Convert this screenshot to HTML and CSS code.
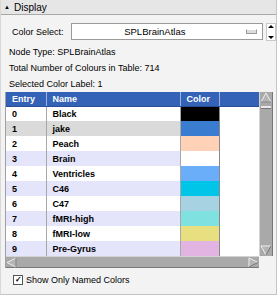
FILE: index.html
```html
<!DOCTYPE html>
<html lang="en">
<head>
    <meta charset="UTF-8">
    <title>Display</title>
    <link rel="stylesheet" href="styles.css">
</head>
<body>
    <div class="panel">
        <div class="title-bar"><span class="collapse">&#9650;</span>Display</div>
        <div class="panel-body">
            <div class="select-row">
                <span class="select-label">Color Select:</span>
                <div class="combo">
                    <span class="combo-text">SPLBrainAtlas</span>
                    <span class="combo-btn"></span>
                </div>
                <div class="spin">
                    <span class="spin-up"></span>
                    <span class="spin-down"></span>
                </div>
            </div>
            <div class="info-block">
                <div class="info">Node Type: SPLBrainAtlas</div>
                <div class="info">Total Number of Colours in Table: 714</div>
                <div class="info">Selected Color Label: 1</div>
            </div>

            <div class="table-frame">
                <div class="table-wrap">
                    <table class="colors">
                        <thead>
                            <tr><th class="c-entry">Entry</th><th class="c-name">Name</th><th class="c-color">Color</th><th class="c-fill"></th></tr>
                        </thead>
                        <tbody>
                            <tr><td>0</td><td>Black</td><td class="swatch" style="background:#000000"></td><td class="fill"></td></tr>
                            <tr class="sel"><td>1</td><td>jake</td><td class="swatch" style="background:#3a7cd0"></td><td class="fill"></td></tr>
                            <tr><td>2</td><td>Peach</td><td class="swatch" style="background:#ffd2b8"></td><td class="fill"></td></tr>
                            <tr class="alt"><td>3</td><td>Brain</td><td class="swatch" style="background:#ffffff"></td><td class="fill"></td></tr>
                            <tr><td>4</td><td>Ventricles</td><td class="swatch" style="background:#6aaefa"></td><td class="fill"></td></tr>
                            <tr class="alt"><td>5</td><td>C46</td><td class="swatch" style="background:#00c4e8"></td><td class="fill"></td></tr>
                            <tr><td>6</td><td>C47</td><td class="swatch" style="background:#a6d2e2"></td><td class="fill"></td></tr>
                            <tr class="alt"><td>7</td><td>fMRI-high</td><td class="swatch" style="background:#80e2e0"></td><td class="fill"></td></tr>
                            <tr><td>8</td><td>fMRI-low</td><td class="swatch" style="background:#e8e080"></td><td class="fill"></td></tr>
                            <tr class="alt"><td>9</td><td>Pre-Gyrus</td><td class="swatch" style="background:#e2b4e2"></td><td class="fill"></td></tr>
                        </tbody>
                    </table>
                </div>
                <div class="vscroll">
                    <svg class="arrow" width="12" height="11" viewBox="0 0 12 11"><polygon points="6,1 11,10 1,10" fill="#b4b4b4" stroke="#eeeeee"/><polyline points="11,10 1,10" stroke="#666" fill="none"/></svg>
                    <span class="grip"></span>
                    <span class="vspace"></span>
                    <svg class="arrow" width="12" height="11" viewBox="0 0 12 11"><polygon points="1,1 11,1 6,10" fill="#b4b4b4" stroke="#eeeeee"/><polyline points="11,1 6,10" stroke="#666" fill="none"/></svg>
                </div>
                <div class="hscroll">
                    <svg class="arrow" width="11" height="11" viewBox="0 0 11 11"><polygon points="1,5.5 10,1 10,10" fill="#b4b4b4" stroke="#eeeeee"/><polyline points="10,1 10,10" stroke="#666" fill="none"/></svg>
                    <span class="hspace"></span>
                    <svg class="arrow" width="11" height="11" viewBox="0 0 11 11"><polygon points="1,1 10,5.5 1,10" fill="#b4b4b4" stroke="#eeeeee"/><polyline points="10,5.5 1,10" stroke="#666" fill="none"/></svg>
                </div>
                <div class="corner"></div>
            </div>

            <label class="check"><span class="box">&#10003;</span>Show Only Named Colors</label>
        </div>
    </div>
</body>
</html>
```

FILE: styles.css
```css
body {
    margin: 0;
    background: #ffffff;
    font-family: "Liberation Sans", Arial, sans-serif;
    font-size: 9px;
    color: #000;
}
.panel {
    width: 277px;
    height: 295px;
    background: #f3f3f3;
    border-right: 1px solid #c4c4c4;
    border-bottom: 1px solid #c4c4c4;
    border-left: 1px solid #d8d8d8;
    box-sizing: border-box;
}
.title-bar {
    height: 14px;
    line-height: 14px;
    background: #e6e6e6;
    border-bottom: 1px solid #a8a8a8;
    padding-left: 3px;
    font-size: 10px;
}
.collapse {
    display: inline-block;
    font-size: 6px;
    width: 10px;
    vertical-align: 2px;
}
.panel-body {
    padding: 8px 0 0 4px;
}
.select-row {
    display: flex;
    align-items: center;
    height: 17px;
}
.select-label {
    width: 59px;
    padding-left: 7px;
}
.combo {
    width: 194px;
    height: 17px;
    box-sizing: border-box;
    border: 1px solid #9a9a9a;
    background: #fff;
    display: flex;
    align-items: center;
}
.combo-text {
    flex: 1;
    text-align: center;
    font-size: 9.5px;
    padding-right: 8px;
}
.combo-btn {
    width: 9px;
    height: 3px;
    background: #dcdcdc;
    border: 1px solid #9a9a9a;
    border-top-color: #fff;
    margin-right: 5px;
}
.spin {
    width: 8px;
    height: 16px;
    margin-left: 3px;
    display: flex;
    flex-direction: column;
    justify-content: space-between;
    background: #fff;
    border: 1px solid #c8c8c8;
}
.spin-up, .spin-down {
    width: 0;
    height: 0;
    margin: 1px auto;
    border-left: 3px solid transparent;
    border-right: 3px solid transparent;
}
.spin-up {
    border-bottom: 3px solid #000;
}
.spin-down {
    border-top: 3px solid #000;
}
.info-block {
    margin-top: 4px;
}
.info {
    height: 16px;
    line-height: 16px;
    padding-left: 4px;
}
.table-frame {
    display: grid;
    grid-template-columns: 253px 14px;
    grid-template-rows: 164px 12px;
    width: 268px;
    border-left: 1px solid #a0a0a0;
}
.table-wrap {
    background: #fff;
    overflow: hidden;
}
.colors {
    border-collapse: collapse;
    table-layout: fixed;
    width: 253px;
    font-weight: bold;
}
.colors th {
    height: 14px;
    padding: 0 0 0 6px;
    background: #3462b6;
    color: #fff;
    text-align: left;
    border-right: 1px solid #9fb2e2;
    border-bottom: 1px solid #2a4e94;
    box-sizing: border-box;
}
.c-entry { width: 40px; }
.c-name { width: 134px; }
.c-color { width: 39px; }
.c-fill { width: 40px; }
.colors td {
    height: 15px;
    padding: 0 0 0 6px;
    box-sizing: border-box;
    border-right: 1px solid #a8a8a8;
}
.colors tr.alt td {
    background: #e4e4fa;
}
.colors tr.sel td {
    background: #dadada;
}
.colors td.swatch {
    border-right: 1px solid #888;
    border-left: 1px solid #888;
}
.colors td.fill,
.colors tr.alt td.fill,
.colors tr.sel td.fill {
    background: #fff;
    border-right: none;
}
.vscroll {
    background: #a9a9a9;
    border-left: 1px solid #d4d4d4;
    border-right: 1px solid #777;
    display: flex;
    flex-direction: column;
    align-items: center;
}
.vspace, .hspace {
    flex: 1;
}
.grip {
    display: block;
    width: 10px;
    height: 2px;
    margin-top: 3px;
    background: #e8e8e8;
    border-bottom: 1px solid #777;
}
.hscroll {
    background: #a9a9a9;
    border-top: 1px solid #d4d4d4;
    border-bottom: 1px solid #777;
    display: flex;
    align-items: center;
}
.corner {
    background: #f3f3f3;
}
.arrow {
    display: block;
    flex: none;
}
.check {
    display: flex;
    align-items: center;
    margin-top: 7px;
    padding-left: 8px;
}
.box {
    width: 8px;
    height: 8px;
    border: 1px solid #555;
    background: #fff;
    font-size: 8px;
    line-height: 8px;
    text-align: center;
    margin-right: 3px;
    font-weight: bold;
}
```
